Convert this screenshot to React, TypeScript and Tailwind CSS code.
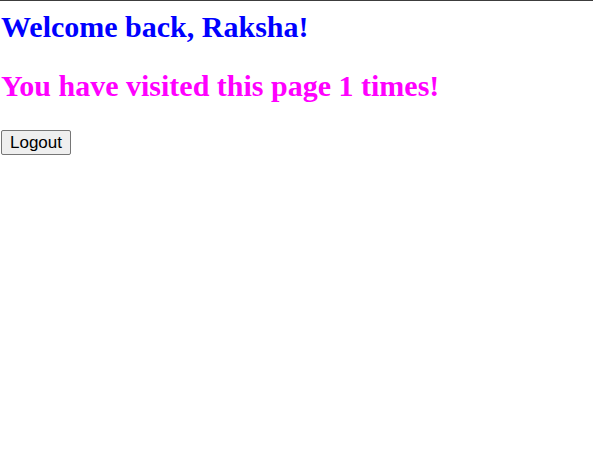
export default function App() {
  return (
    <div
      className="min-h-[451px] w-full border-t border-[#3c3c3c] bg-white"
      style={{ fontFamily: "'Liberation Serif', 'Times New Roman', serif" }}
    >
      <div className="flex flex-col items-start">
        <h2 className="ml-px mt-[9px] text-[30px] font-bold leading-[34px] text-[#0000ff]">
          Welcome back, Raksha!
        </h2>
        <h2 className="ml-px mt-[25px] text-[30px] font-bold leading-[34px] text-[#ff00ff]">
          You have visited this page 1 times!
        </h2>
        <button
          className="ml-px mt-[27px] h-[25px] w-[70px] rounded-[2px] border border-[#767676] bg-[#efefef] text-[17px] leading-none text-black"
          style={{ fontFamily: "'Liberation Sans', Arial, sans-serif" }}
        >
          Logout
        </button>
      </div>
    </div>
  );
}
